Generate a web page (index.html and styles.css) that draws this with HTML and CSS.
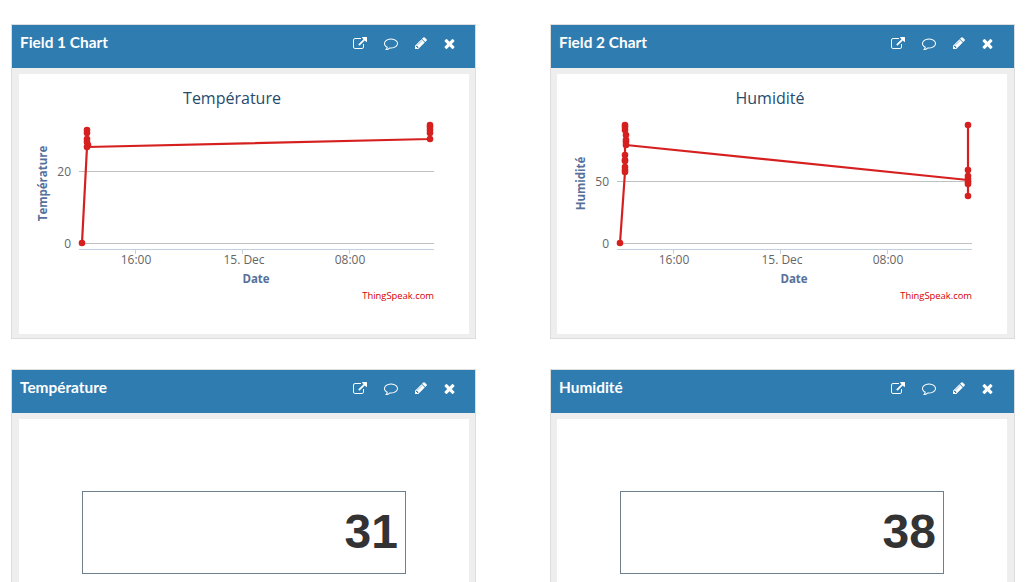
FILE: index.html
```html
<!DOCTYPE html>
<html lang="fr">
<head>
<meta charset="utf-8">
<title>ThingSpeak channel</title>
<link rel="stylesheet" href="styles.css">
</head>
<body>
<svg class="defs" aria-hidden="true">
  <symbol id="i-link" viewBox="0 128 1792 1536"><path d="M1408 928v320q0 119-84.5 203.5t-203.5 84.5h-832q-119 0-203.5-84.5t-84.5-203.5v-832q0-119 84.5-203.5t203.5-84.5h704q14 0 23 9t9 23v64q0 14-9 23t-23 9h-704q-66 0-113 47t-47 113v832q0 66 47 113t113 47h832q66 0 113-47t47-113v-320q0-14 9-23t23-9h64q14 0 23 9t9 23zm384-864v512q0 26-19 45t-45 19-45-19l-176-176-652 652q-10 10-23 10t-23-10l-114-114q-10-10-10-23t10-23l652-652-176-176q-19-19-19-45t19-45 45-19h512q26 0 45 19t19 45z" transform="translate(0 64)"/></symbol>
  <symbol id="i-comment" viewBox="0 128 1792 1536"><path d="M896 384q-204 0-381.500 69.500t-282 187.500-104.500 255q0 112 71.500 213.500t201.500 175.500l87 50-27 96q-24 91-70 172 152-63 275-171l43-38 57 6q69 8 130 8 204 0 381.500-69.500t282-187.500 104.500-255-104.500-255-282-187.500-381.500-69.500zm896 512q0 174-120 321.500t-326 233-450 85.500q-70 0-145-8-198 175-460 242-49 14-114 22h-5q-15 0-27-10.500t-16-27.500v-1q-3-4-.5-12t2-10 4.500-9.500l6-9 7-8.500 8-9q7-8 31-34.500t34.500-38 31-39.500 32.500-51 27-59 26-76q-157-89-247.500-220t-90.500-281q0-174 120-321.500t326-233 450-85.500 450 85.500 326 233 120 321.500z"/></symbol>
  <symbol id="i-pencil" viewBox="128 128 1536 1536"><path d="M491 1536l91-91-235-235-91 91v107h128v128h107zm523-928q0-22-22-22-10 0-17 7l-542 542q-7 7-7 17 0 22 22 22 10 0 17-7l542-542q7-7 7-17zm-54-192l416 416-832 832h-416v-416zm683 96q0 53-37 90l-166 166-416-416 166-165q36-38 90-38 53 0 91 38l235 234q37 39 37 91z"/></symbol>
  <symbol id="i-close" viewBox="300 240 1190 1314"><path d="M1490 1322q0 40-28 68l-136 136q-28 28-68 28t-68-28l-294-294-294 294q-28 28-68 28t-68-28l-136-136q-28-28-28-68t28-68l294-294-294-294q-28-28-28-68t28-68l136-136q28-28 68-28t68 28l294 294 294-294q28-28 68-28t68 28l136 136q28 28 28 68t-28 68l-294 294 294 294q28 28 28 68z"/></symbol>
</svg>

<main class="board">

  <section class="card">
    <header class="card-head">
      <h2 class="card-title">Field 1 Chart</h2>
      <div class="tools">
        <svg class="icon icon-link"><use href="#i-link"/></svg>
        <svg class="icon icon-comment"><use href="#i-comment"/></svg>
        <svg class="icon icon-pencil"><use href="#i-pencil"/></svg>
        <svg class="icon icon-close"><use href="#i-close"/></svg>
      </div>
    </header>
    <div class="card-body">
      <div class="panel">
        <svg class="chart" viewBox="19 74 450 260">
          <text class="c-title" x="232" y="104">Température</text>
          <line class="grid" x1="79" y1="171.500" x2="434" y2="171.500"/>
          <line class="grid" x1="79" y1="243.500" x2="434" y2="243.500"/>
          <line class="axis" x1="79" y1="249.500" x2="434" y2="249.500"/>
          <line class="axis" x1="135.500" y1="250" x2="135.500" y2="254"/>
          <line class="axis" x1="242.500" y1="250" x2="242.500" y2="254"/>
          <line class="axis" x1="349.500" y1="250" x2="349.500" y2="254"/>
          <text class="y-label" x="71" y="176">20</text>
          <text class="y-label" x="71" y="248">0</text>
          <text class="x-label" x="136" y="264">16:00</text>
          <text class="x-label" x="244" y="264">15. Dec</text>
          <text class="x-label" x="350" y="264">08:00</text>
          <text class="a-title" x="256" y="283">Date</text>
          <text class="a-title" transform="translate(47 183.500) rotate(-90)">Température</text>
          <polyline class="series" points="82,243 87,147 87,130 87,147 430,139 430,125"/>
          <g class="pts">
            <circle cx="82" cy="243" r="3.300"/>
            <circle cx="87" cy="130" r="3.300"/><circle cx="87" cy="133" r="3.300"/><circle cx="87" cy="139" r="3.300"/><circle cx="87" cy="142" r="3.300"/><circle cx="88" cy="145" r="3.300"/><circle cx="87" cy="147" r="3.300"/>
            <circle cx="430" cy="125" r="3.300"/><circle cx="430" cy="127" r="3.300"/><circle cx="430" cy="130" r="3.300"/><circle cx="430" cy="133" r="3.300"/><circle cx="430" cy="139" r="3.300"/>
          </g>
          <text class="credit" x="434" y="299">ThingSpeak.com</text>
        </svg>
      </div>
    </div>
  </section>

  <section class="card">
    <header class="card-head">
      <h2 class="card-title">Field 2 Chart</h2>
      <div class="tools">
        <svg class="icon icon-link"><use href="#i-link"/></svg>
        <svg class="icon icon-comment"><use href="#i-comment"/></svg>
        <svg class="icon icon-pencil"><use href="#i-pencil"/></svg>
        <svg class="icon icon-close"><use href="#i-close"/></svg>
      </div>
    </header>
    <div class="card-body">
      <div class="panel">
        <svg class="chart" viewBox="557 74 450 260">
          <text class="c-title" x="770" y="104">Humidité</text>
          <line class="grid" x1="617" y1="181.500" x2="972" y2="181.500"/>
          <line class="grid" x1="617" y1="243.500" x2="972" y2="243.500"/>
          <line class="axis" x1="617" y1="249.500" x2="972" y2="249.500"/>
          <line class="axis" x1="673.500" y1="250" x2="673.500" y2="254"/>
          <line class="axis" x1="780.500" y1="250" x2="780.500" y2="254"/>
          <line class="axis" x1="887.500" y1="250" x2="887.500" y2="254"/>
          <text class="y-label" x="609" y="186">50</text>
          <text class="y-label" x="609" y="248">0</text>
          <text class="x-label" x="674" y="264">16:00</text>
          <text class="x-label" x="782" y="264">15. Dec</text>
          <text class="x-label" x="888" y="264">08:00</text>
          <text class="a-title" x="794" y="283">Date</text>
          <text class="a-title" transform="translate(585 183.500) rotate(-90)">Humidité</text>
          <polyline class="series" points="620,243 625,172 625,125 626,145 968,180 968,125 968,196"/>
          <g class="pts">
            <circle cx="620" cy="243" r="3.300"/>
            <circle cx="625" cy="125" r="3.300"/><circle cx="625" cy="127" r="3.300"/><circle cx="625" cy="130" r="3.300"/><circle cx="626" cy="135" r="3.300"/><circle cx="626" cy="140" r="3.300"/><circle cx="626" cy="142" r="3.300"/><circle cx="626" cy="145" r="3.300"/>
            <circle cx="625" cy="155" r="3.300"/><circle cx="625" cy="160" r="3.300"/><circle cx="625" cy="161" r="3.300"/><circle cx="625" cy="167" r="3.300"/><circle cx="625" cy="170" r="3.300"/><circle cx="625" cy="172" r="3.300"/>
            <circle cx="968" cy="125" r="3.300"/><circle cx="968" cy="170" r="3.300"/><circle cx="968" cy="176" r="3.300"/><circle cx="968" cy="179" r="3.300"/><circle cx="968" cy="182" r="3.300"/><circle cx="968" cy="184" r="3.300"/><circle cx="968" cy="196" r="3.300"/>
          </g>
          <text class="credit" x="972" y="299">ThingSpeak.com</text>
        </svg>
      </div>
    </div>
  </section>

  <section class="card">
    <header class="card-head">
      <h2 class="card-title">Température</h2>
      <div class="tools">
        <svg class="icon icon-link"><use href="#i-link"/></svg>
        <svg class="icon icon-comment"><use href="#i-comment"/></svg>
        <svg class="icon icon-pencil"><use href="#i-pencil"/></svg>
        <svg class="icon icon-close"><use href="#i-close"/></svg>
      </div>
    </header>
    <div class="card-body">
      <div class="panel panel-value">
        <div class="value">31</div>
      </div>
    </div>
  </section>

  <section class="card">
    <header class="card-head">
      <h2 class="card-title">Humidité</h2>
      <div class="tools">
        <svg class="icon icon-link"><use href="#i-link"/></svg>
        <svg class="icon icon-comment"><use href="#i-comment"/></svg>
        <svg class="icon icon-pencil"><use href="#i-pencil"/></svg>
        <svg class="icon icon-close"><use href="#i-close"/></svg>
      </div>
    </header>
    <div class="card-body">
      <div class="panel panel-value">
        <div class="value">38</div>
      </div>
    </div>
  </section>

</main>
</body>
</html>
```
FILE: styles.css
```css
html, body {
  margin: 0;
  padding: 0;
  height: 582px;
  overflow: hidden;
  background: #fff;
}

.defs {
  display: none;
}

.board {
  display: grid;
  grid-template-columns: 465px 465px;
  column-gap: 74px;
  row-gap: 30px;
  padding: 24px 0 0 11px;
}

.card {
  border: 1px solid #ddd;
  height: 315px;
  box-sizing: border-box;
  display: flex;
  flex-direction: column;
  background: #eee;
}

.card-head {
  box-sizing: border-box;
  height: 43px;
  flex: none;
  background: #2e7cb0;
  display: flex;
  align-items: center;
  justify-content: space-between;
  padding: 0 20px 7px 8px;
}

.card:nth-child(even) .card-head {
  padding-right: 21px;
}

.card-title {
  margin: 0;
  font: 700 15.400px/1 Lato, sans-serif;
  color: #fff;
}

.tools {
  display: flex;
  align-items: center;
  gap: 17px;
  color: #fff;
}

.icon {
  display: block;
  fill: currentColor;
  height: 13px;
}

.icon-link { width: 14px; }
.icon-comment { width: 14px; }
.icon-pencil { width: 12px; height: 12px; }
.icon-close { width: 11px; height: 11px; }

.card-body {
  flex: 1;
  padding: 6px 6px 4px 7px;
  display: flex;
}

.card:nth-child(even) .card-body {
  padding-left: 6px;
  padding-right: 7px;
}

.panel {
  flex: 1;
  background: #fff;
}

.panel-value {
  padding: 72px 63px 0;
}

.chart {
  display: block;
  width: 450px;
  height: 260px;
  font-family: "Open Sans", sans-serif;
}

.c-title {
  font-size: 16px;
  fill: #274b6d;
  text-anchor: middle;
}

.grid {
  stroke: #c0c0c0;
  stroke-width: 1;
}

.axis {
  stroke: #c0d0e0;
  stroke-width: 1;
}

.y-label {
  font-size: 12px;
  fill: #666;
  text-anchor: end;
}

.x-label {
  font-size: 12px;
  fill: #666;
  text-anchor: middle;
}

.a-title {
  font-size: 11.500px;
  font-weight: 700;
  fill: #56709a;
  text-anchor: middle;
}

.series {
  fill: none;
  stroke: #d62020;
  stroke-width: 2.200;
  stroke-linejoin: round;
}

.pts {
  fill: #d62020;
}

.credit {
  font-size: 9.400px;
  fill: #d40000;
  text-anchor: end;
}

.value {
  box-sizing: border-box;
  height: 83px;
  border: 1px solid #6e7f8d;
  text-align: right;
  padding-right: 7px;
  font: 700 48px/79px "Liberation Sans", Arial, sans-serif;
  color: #333;
}
```
